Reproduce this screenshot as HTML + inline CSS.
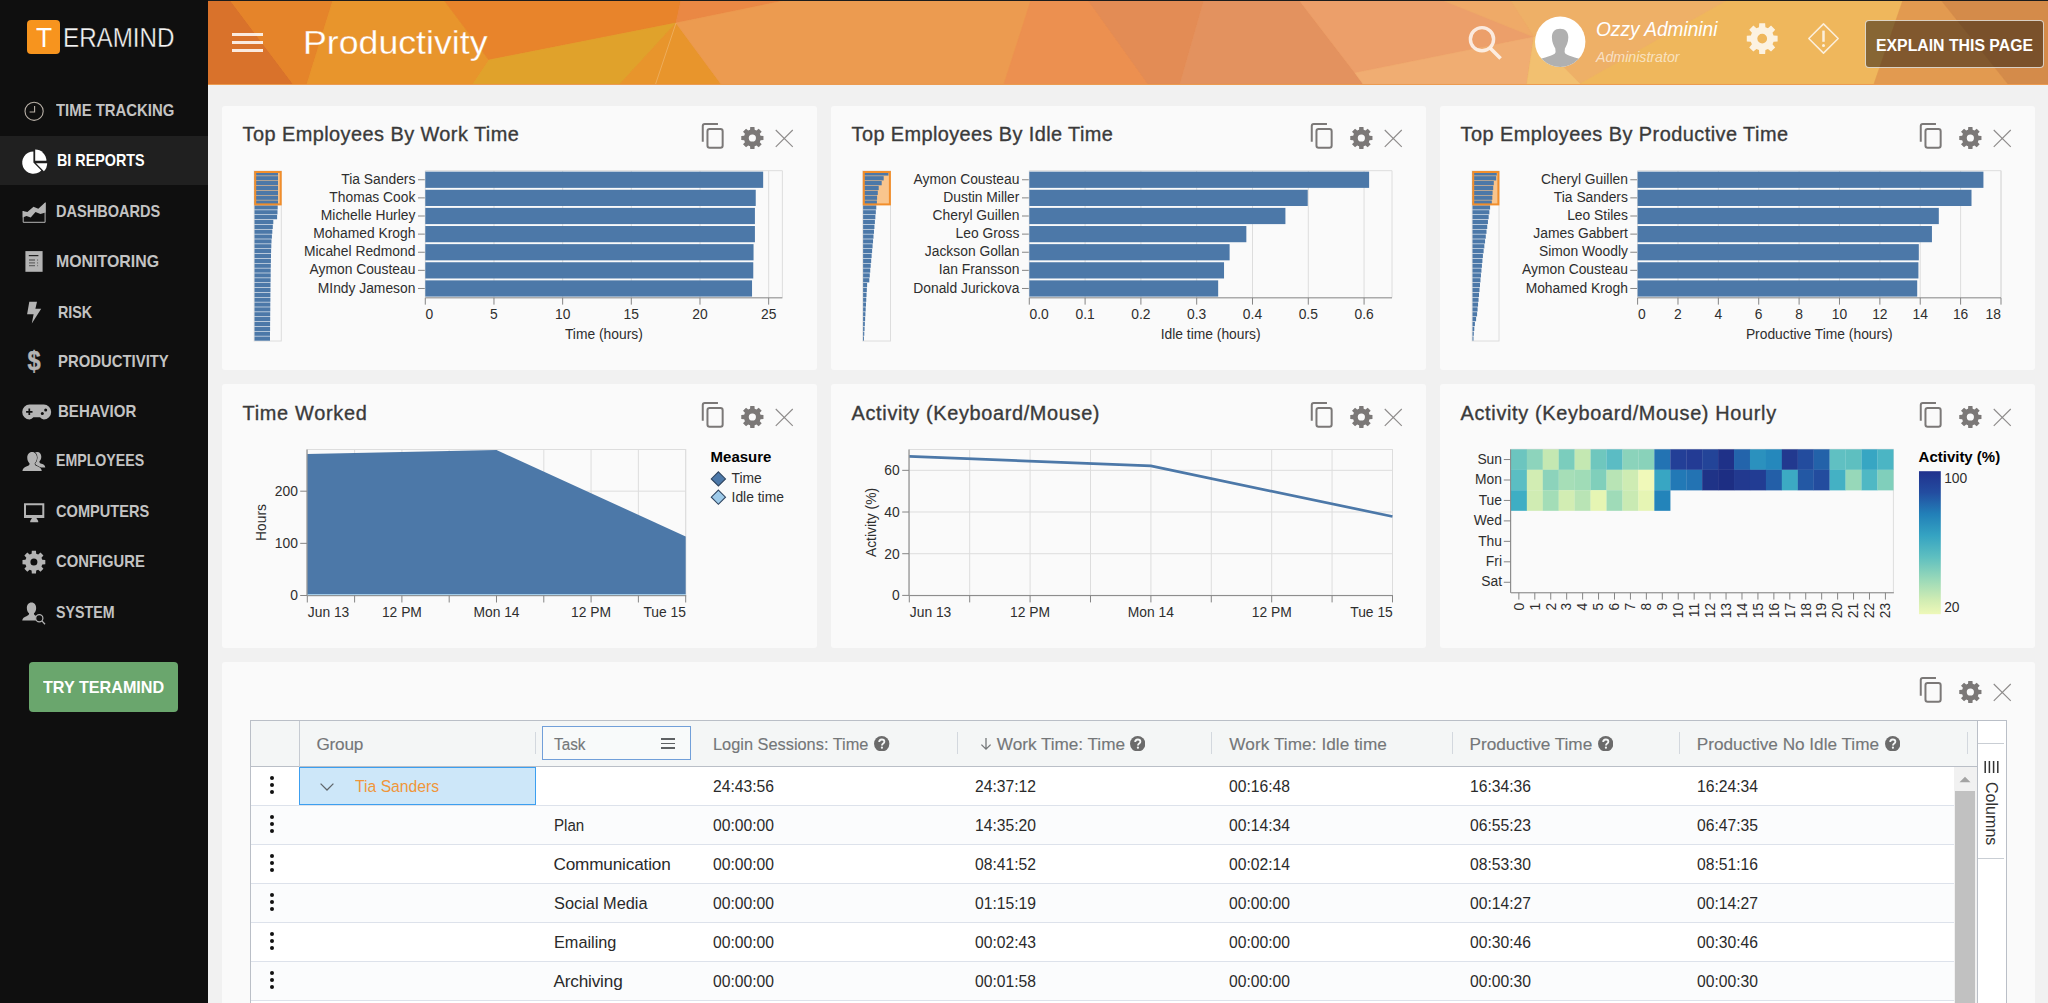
<!DOCTYPE html><html lang="en"><head><meta charset="utf-8"><title>Productivity - Teramind</title><style>html,body{margin:0;padding:0}body{width:2048px;height:1003px;overflow:hidden;position:relative;background:#f1f1f1;font-family:"Liberation Sans",sans-serif;}span{-webkit-font-smoothing:antialiased}</style></head><body><div id="content" style="position:absolute;left:208px;top:84px;width:1840px;height:919px;background:#f1f1f1"></div><div class="panel" style="position:absolute;left:222.00px;top:106.00px;width:594.67px;height:264.00px;background:#fafafa;border-radius:3px;overflow:hidden"><span class="ptitle" style="position:absolute;left:20.60px;top:19.05px;font-size:19.90px;line-height:19.90px;white-space:pre;font-weight:400;color:#3a3a3a;letter-spacing:0.450px;-webkit-text-stroke:0.35px #3a3a3a;">Top Employees By Work Time</span><svg style="position:absolute;left:0;top:0.00px" width="594.67" height="60" viewBox="0 0 594.67 60"><path d="M480.77 35.7 V20.1 Q480.77 18.1 482.77 18.1 H495.97" fill="none" stroke="#7b7877" stroke-width="2"/><rect x="485.47" y="23.1" width="15.2" height="18.6" rx="2.2" fill="none" stroke="#7b7877" stroke-width="2"/><path d="M528.06 23.82 L528.25 20.90 L532.49 20.90 L532.68 23.82 L534.52 24.58 L536.72 22.65 L539.72 25.65 L537.79 27.85 L538.55 29.69 L541.47 29.88 L541.47 34.12 L538.55 34.31 L537.79 36.15 L539.72 38.35 L536.72 41.35 L534.52 39.42 L532.68 40.18 L532.49 43.10 L528.25 43.10 L528.06 40.18 L526.22 39.42 L524.02 41.35 L521.02 38.35 L522.95 36.15 L522.19 34.31 L519.27 34.12 L519.27 29.88 L522.19 29.69 L522.95 27.85 L521.02 25.65 L524.02 22.65 L526.22 24.58Z M526.77 32.00 a3.60 3.60 0 1 0 7.20 0 a3.60 3.60 0 1 0 -7.20 0Z" fill="#7b7877" fill-rule="evenodd"/><path d="M553.77 24 L570.77 40.8 M570.77 24 L553.77 40.8" stroke="#7b7877" stroke-width="1.1" opacity="0.85"/></svg><svg style="position:absolute;left:0;top:0" width="594.67" height="264.00" viewBox="222.00 106.00 594.67 264.00" font-family='"Liberation Sans", sans-serif' font-size="13.85" fill="#2e2e2e"><rect x="254.20" y="171" width="27.10" height="170" fill="none" stroke="#dddddd" stroke-width="1"/><rect x="255.20" y="172" width="25.50" height="32.4" fill="#f9c58d"/><g fill="#4c78a8"><rect x="254.50" y="171.30" width="23.50" height="4.26"/><rect x="254.50" y="176.16" width="23.50" height="4.26"/><rect x="254.50" y="181.01" width="23.50" height="4.26"/><rect x="254.50" y="185.87" width="23.50" height="4.26"/><rect x="254.50" y="190.73" width="23.50" height="4.26"/><rect x="254.50" y="195.59" width="23.50" height="4.26"/><rect x="254.50" y="200.44" width="23.50" height="4.26"/><rect x="254.50" y="205.30" width="23.20" height="4.26"/><rect x="254.50" y="210.16" width="23.00" height="4.26"/><rect x="254.50" y="215.01" width="22.60" height="4.26"/><rect x="254.50" y="219.87" width="18.80" height="4.26"/><rect x="254.50" y="224.73" width="18.30" height="4.26"/><rect x="254.50" y="229.59" width="17.80" height="4.26"/><rect x="254.50" y="234.44" width="17.40" height="4.26"/><rect x="254.50" y="239.30" width="17.00" height="4.26"/><rect x="254.50" y="244.16" width="16.80" height="4.26"/><rect x="254.50" y="249.01" width="16.60" height="4.26"/><rect x="254.50" y="253.87" width="16.50" height="4.26"/><rect x="254.50" y="258.73" width="16.40" height="4.26"/><rect x="254.50" y="263.59" width="16.30" height="4.26"/><rect x="254.50" y="268.44" width="16.20" height="4.26"/><rect x="254.50" y="273.30" width="16.20" height="4.26"/><rect x="254.50" y="278.16" width="16.10" height="4.26"/><rect x="254.50" y="283.01" width="16.00" height="4.26"/><rect x="254.50" y="287.87" width="16.00" height="4.26"/><rect x="254.50" y="292.73" width="15.90" height="4.26"/><rect x="254.50" y="297.59" width="15.90" height="4.26"/><rect x="254.50" y="302.44" width="15.80" height="4.26"/><rect x="254.50" y="307.30" width="15.80" height="4.26"/><rect x="254.50" y="312.16" width="15.70" height="4.26"/><rect x="254.50" y="317.01" width="15.70" height="4.26"/><rect x="254.50" y="321.87" width="15.60" height="4.26"/><rect x="254.50" y="326.73" width="15.60" height="4.26"/><rect x="254.50" y="331.59" width="15.50" height="4.26"/><rect x="254.50" y="336.44" width="15.50" height="4.26"/></g><rect x="255.20" y="172" width="25.50" height="32.4" fill="none" stroke="#f28e2b" stroke-width="2"/><g stroke="#dddddd" stroke-width="1"><path d="M425.30 170.70 V297.54"/><path d="M493.97 170.70 V297.54"/><path d="M562.65 170.70 V297.54"/><path d="M631.32 170.70 V297.54"/><path d="M699.99 170.70 V297.54"/><path d="M768.67 170.70 V297.54"/><path d="M425.30 170.70 H782.40 V297.54" fill="none"/></g><g fill="#4c78a8"><rect x="425.30" y="171.65" width="337.87" height="16.22"/><rect x="425.30" y="189.77" width="330.45" height="16.22"/><rect x="425.30" y="207.89" width="329.63" height="16.22"/><rect x="425.30" y="226.01" width="329.63" height="16.22"/><rect x="425.30" y="244.13" width="328.26" height="16.22"/><rect x="425.30" y="262.25" width="327.98" height="16.22"/><rect x="425.30" y="280.37" width="326.75" height="16.22"/></g><g stroke="#858585" stroke-width="1"><path d="M425.30 297.84 H782.40"/><path d="M425.30 297.84 v6.8"/><path d="M493.97 297.84 v6.8"/><path d="M562.65 297.84 v6.8"/><path d="M631.32 297.84 v6.8"/><path d="M699.99 297.84 v6.8"/><path d="M768.67 297.84 v6.8"/><path d="M424.80 179.76 h-6.8"/><path d="M424.80 197.88 h-6.8"/><path d="M424.80 216.00 h-6.8"/><path d="M424.80 234.12 h-6.8"/><path d="M424.80 252.24 h-6.8"/><path d="M424.80 270.36 h-6.8"/><path d="M424.80 288.48 h-6.8"/></g><text x="415.40" y="183.82" text-anchor="end">Tia Sanders</text><text x="415.40" y="201.94" text-anchor="end">Thomas Cook</text><text x="415.40" y="220.06" text-anchor="end">Michelle Hurley</text><text x="415.40" y="238.18" text-anchor="end">Mohamed Krogh</text><text x="415.40" y="256.30" text-anchor="end">Micahel Redmond</text><text x="415.40" y="274.42" text-anchor="end">Aymon Cousteau</text><text x="415.40" y="292.54" text-anchor="end">MIndy Jameson</text><text x="425.60" y="319.46">0</text><text x="493.97" y="319.46" text-anchor="middle">5</text><text x="562.65" y="319.46" text-anchor="middle">10</text><text x="631.32" y="319.46" text-anchor="middle">15</text><text x="699.99" y="319.46" text-anchor="middle">20</text><text x="768.67" y="319.46" text-anchor="middle">25</text><text x="603.85" y="339.26" text-anchor="middle">Time (hours)</text></svg></div><div class="panel" style="position:absolute;left:831.00px;top:106.00px;width:594.67px;height:264.00px;background:#fafafa;border-radius:3px;overflow:hidden"><span class="ptitle" style="position:absolute;left:20.60px;top:19.05px;font-size:19.90px;line-height:19.90px;white-space:pre;font-weight:400;color:#3a3a3a;letter-spacing:0.410px;-webkit-text-stroke:0.35px #3a3a3a;">Top Employees By Idle Time</span><svg style="position:absolute;left:0;top:0.00px" width="594.67" height="60" viewBox="0 0 594.67 60"><path d="M480.77 35.7 V20.1 Q480.77 18.1 482.77 18.1 H495.97" fill="none" stroke="#7b7877" stroke-width="2"/><rect x="485.47" y="23.1" width="15.2" height="18.6" rx="2.2" fill="none" stroke="#7b7877" stroke-width="2"/><path d="M528.06 23.82 L528.25 20.90 L532.49 20.90 L532.68 23.82 L534.52 24.58 L536.72 22.65 L539.72 25.65 L537.79 27.85 L538.55 29.69 L541.47 29.88 L541.47 34.12 L538.55 34.31 L537.79 36.15 L539.72 38.35 L536.72 41.35 L534.52 39.42 L532.68 40.18 L532.49 43.10 L528.25 43.10 L528.06 40.18 L526.22 39.42 L524.02 41.35 L521.02 38.35 L522.95 36.15 L522.19 34.31 L519.27 34.12 L519.27 29.88 L522.19 29.69 L522.95 27.85 L521.02 25.65 L524.02 22.65 L526.22 24.58Z M526.77 32.00 a3.60 3.60 0 1 0 7.20 0 a3.60 3.60 0 1 0 -7.20 0Z" fill="#7b7877" fill-rule="evenodd"/><path d="M553.77 24 L570.77 40.8 M570.77 24 L553.77 40.8" stroke="#7b7877" stroke-width="1.1" opacity="0.85"/></svg><svg style="position:absolute;left:0;top:0" width="594.67" height="264.00" viewBox="831.00 106.00 594.67 264.00" font-family='"Liberation Sans", sans-serif' font-size="13.85" fill="#2e2e2e"><rect x="862.80" y="171" width="27.70" height="170" fill="none" stroke="#dddddd" stroke-width="1"/><rect x="863.80" y="172" width="26.10" height="32.4" fill="#f9c58d"/><g fill="#4c78a8"><rect x="863.10" y="171.30" width="25.40" height="4.26"/><rect x="863.10" y="176.16" width="20.60" height="4.26"/><rect x="863.10" y="181.01" width="18.60" height="4.26"/><rect x="863.10" y="185.87" width="15.60" height="4.26"/><rect x="863.10" y="190.73" width="14.70" height="4.26"/><rect x="863.10" y="195.59" width="14.00" height="4.26"/><rect x="863.10" y="200.44" width="13.80" height="4.26"/><rect x="863.10" y="205.30" width="13.20" height="4.26"/><rect x="863.10" y="210.16" width="12.73" height="4.26"/><rect x="863.10" y="215.01" width="12.27" height="4.26"/><rect x="863.10" y="219.87" width="11.80" height="4.26"/><rect x="863.10" y="224.73" width="11.33" height="4.26"/><rect x="863.10" y="229.59" width="10.87" height="4.26"/><rect x="863.10" y="234.44" width="10.40" height="4.26"/><rect x="863.10" y="239.30" width="9.93" height="4.26"/><rect x="863.10" y="244.16" width="9.47" height="4.26"/><rect x="863.10" y="249.01" width="9.00" height="4.26"/><rect x="863.10" y="253.87" width="8.53" height="4.26"/><rect x="863.10" y="258.73" width="8.07" height="4.26"/><rect x="863.10" y="263.59" width="7.60" height="4.26"/><rect x="863.10" y="268.44" width="7.13" height="4.26"/><rect x="863.10" y="273.30" width="6.67" height="4.26"/><rect x="863.10" y="278.16" width="6.20" height="4.26"/><rect x="863.10" y="283.01" width="4.00" height="4.26"/><rect x="863.10" y="287.87" width="3.72" height="4.26"/><rect x="863.10" y="292.73" width="3.44" height="4.26"/><rect x="863.10" y="297.59" width="3.15" height="4.26"/><rect x="863.10" y="302.44" width="2.87" height="4.26"/><rect x="863.10" y="307.30" width="2.59" height="4.26"/><rect x="863.10" y="312.16" width="2.31" height="4.26"/><rect x="863.10" y="317.01" width="2.03" height="4.26"/><rect x="863.10" y="321.87" width="1.75" height="4.26"/><rect x="863.10" y="326.73" width="1.46" height="4.26"/><rect x="863.10" y="331.59" width="1.18" height="4.26"/><rect x="863.10" y="336.44" width="0.90" height="4.26"/></g><rect x="863.80" y="172" width="26.10" height="32.4" fill="none" stroke="#f28e2b" stroke-width="2"/><g stroke="#dddddd" stroke-width="1"><path d="M1029.30 170.70 V297.54"/><path d="M1085.10 170.70 V297.54"/><path d="M1140.90 170.70 V297.54"/><path d="M1196.70 170.70 V297.54"/><path d="M1252.50 170.70 V297.54"/><path d="M1308.30 170.70 V297.54"/><path d="M1364.10 170.70 V297.54"/><path d="M1029.30 170.70 H1392.00 V297.54" fill="none"/></g><g fill="#4c78a8"><rect x="1029.30" y="171.65" width="339.82" height="16.22"/><rect x="1029.30" y="189.77" width="278.44" height="16.22"/><rect x="1029.30" y="207.89" width="256.12" height="16.22"/><rect x="1029.30" y="226.01" width="217.06" height="16.22"/><rect x="1029.30" y="244.13" width="200.32" height="16.22"/><rect x="1029.30" y="262.25" width="194.74" height="16.22"/><rect x="1029.30" y="280.37" width="188.88" height="16.22"/></g><g stroke="#858585" stroke-width="1"><path d="M1029.30 297.84 H1392.00"/><path d="M1029.30 297.84 v6.8"/><path d="M1085.10 297.84 v6.8"/><path d="M1140.90 297.84 v6.8"/><path d="M1196.70 297.84 v6.8"/><path d="M1252.50 297.84 v6.8"/><path d="M1308.30 297.84 v6.8"/><path d="M1364.10 297.84 v6.8"/><path d="M1028.80 179.76 h-6.8"/><path d="M1028.80 197.88 h-6.8"/><path d="M1028.80 216.00 h-6.8"/><path d="M1028.80 234.12 h-6.8"/><path d="M1028.80 252.24 h-6.8"/><path d="M1028.80 270.36 h-6.8"/><path d="M1028.80 288.48 h-6.8"/></g><text x="1019.40" y="183.82" text-anchor="end">Aymon Cousteau</text><text x="1019.40" y="201.94" text-anchor="end">Dustin Miller</text><text x="1019.40" y="220.06" text-anchor="end">Cheryl Guillen</text><text x="1019.40" y="238.18" text-anchor="end">Leo Gross</text><text x="1019.40" y="256.30" text-anchor="end">Jackson Gollan</text><text x="1019.40" y="274.42" text-anchor="end">Ian Fransson</text><text x="1019.40" y="292.54" text-anchor="end">Donald Jurickova</text><text x="1029.60" y="319.46">0.0</text><text x="1085.10" y="319.46" text-anchor="middle">0.1</text><text x="1140.90" y="319.46" text-anchor="middle">0.2</text><text x="1196.70" y="319.46" text-anchor="middle">0.3</text><text x="1252.50" y="319.46" text-anchor="middle">0.4</text><text x="1308.30" y="319.46" text-anchor="middle">0.5</text><text x="1364.10" y="319.46" text-anchor="middle">0.6</text><text x="1210.65" y="339.26" text-anchor="middle">Idle time (hours)</text></svg></div><div class="panel" style="position:absolute;left:1440.00px;top:106.00px;width:594.67px;height:264.00px;background:#fafafa;border-radius:3px;overflow:hidden"><span class="ptitle" style="position:absolute;left:20.60px;top:19.05px;font-size:19.90px;line-height:19.90px;white-space:pre;font-weight:400;color:#3a3a3a;letter-spacing:0.469px;-webkit-text-stroke:0.35px #3a3a3a;">Top Employees By Productive Time</span><svg style="position:absolute;left:0;top:0.00px" width="594.67" height="60" viewBox="0 0 594.67 60"><path d="M480.77 35.7 V20.1 Q480.77 18.1 482.77 18.1 H495.97" fill="none" stroke="#7b7877" stroke-width="2"/><rect x="485.47" y="23.1" width="15.2" height="18.6" rx="2.2" fill="none" stroke="#7b7877" stroke-width="2"/><path d="M528.06 23.82 L528.25 20.90 L532.49 20.90 L532.68 23.82 L534.52 24.58 L536.72 22.65 L539.72 25.65 L537.79 27.85 L538.55 29.69 L541.47 29.88 L541.47 34.12 L538.55 34.31 L537.79 36.15 L539.72 38.35 L536.72 41.35 L534.52 39.42 L532.68 40.18 L532.49 43.10 L528.25 43.10 L528.06 40.18 L526.22 39.42 L524.02 41.35 L521.02 38.35 L522.95 36.15 L522.19 34.31 L519.27 34.12 L519.27 29.88 L522.19 29.69 L522.95 27.85 L521.02 25.65 L524.02 22.65 L526.22 24.58Z M526.77 32.00 a3.60 3.60 0 1 0 7.20 0 a3.60 3.60 0 1 0 -7.20 0Z" fill="#7b7877" fill-rule="evenodd"/><path d="M553.77 24 L570.77 40.8 M570.77 24 L553.77 40.8" stroke="#7b7877" stroke-width="1.1" opacity="0.85"/></svg><svg style="position:absolute;left:0;top:0" width="594.67" height="264.00" viewBox="1440.00 106.00 594.67 264.00" font-family='"Liberation Sans", sans-serif' font-size="13.85" fill="#2e2e2e"><rect x="1472.20" y="171" width="26.80" height="170" fill="none" stroke="#dddddd" stroke-width="1"/><rect x="1473.20" y="172" width="25.20" height="32.4" fill="#f9c58d"/><g fill="#4c78a8"><rect x="1472.50" y="171.30" width="24.30" height="4.26"/><rect x="1472.50" y="176.16" width="23.70" height="4.26"/><rect x="1472.50" y="181.01" width="21.30" height="4.26"/><rect x="1472.50" y="185.87" width="20.70" height="4.26"/><rect x="1472.50" y="190.73" width="20.10" height="4.26"/><rect x="1472.50" y="195.59" width="19.80" height="4.26"/><rect x="1472.50" y="200.44" width="19.30" height="4.26"/><rect x="1472.50" y="205.30" width="17.60" height="4.26"/><rect x="1472.50" y="210.16" width="16.88" height="4.26"/><rect x="1472.50" y="215.01" width="16.16" height="4.26"/><rect x="1472.50" y="219.87" width="15.44" height="4.26"/><rect x="1472.50" y="224.73" width="14.72" height="4.26"/><rect x="1472.50" y="229.59" width="14.00" height="4.26"/><rect x="1472.50" y="234.44" width="13.28" height="4.26"/><rect x="1472.50" y="239.30" width="12.56" height="4.26"/><rect x="1472.50" y="244.16" width="11.84" height="4.26"/><rect x="1472.50" y="249.01" width="11.12" height="4.26"/><rect x="1472.50" y="253.87" width="10.40" height="4.26"/><rect x="1472.50" y="258.73" width="9.90" height="4.26"/><rect x="1472.50" y="263.59" width="9.42" height="4.26"/><rect x="1472.50" y="268.44" width="8.94" height="4.26"/><rect x="1472.50" y="273.30" width="8.45" height="4.26"/><rect x="1472.50" y="278.16" width="7.97" height="4.26"/><rect x="1472.50" y="283.01" width="7.49" height="4.26"/><rect x="1472.50" y="287.87" width="7.01" height="4.26"/><rect x="1472.50" y="292.73" width="6.53" height="4.26"/><rect x="1472.50" y="297.59" width="6.05" height="4.26"/><rect x="1472.50" y="302.44" width="5.56" height="4.26"/><rect x="1472.50" y="307.30" width="5.08" height="4.26"/><rect x="1472.50" y="312.16" width="4.60" height="4.26"/><rect x="1472.50" y="317.01" width="3.60" height="4.26"/><rect x="1472.50" y="321.87" width="2.40" height="4.26"/><rect x="1472.50" y="326.73" width="1.80" height="4.26"/><rect x="1472.50" y="331.59" width="1.30" height="4.26"/><rect x="1472.50" y="336.44" width="1.00" height="4.26"/></g><rect x="1473.20" y="172" width="25.20" height="32.4" fill="none" stroke="#f28e2b" stroke-width="2"/><g stroke="#dddddd" stroke-width="1"><path d="M1637.60 170.70 V297.54"/><path d="M1677.98 170.70 V297.54"/><path d="M1718.36 170.70 V297.54"/><path d="M1758.73 170.70 V297.54"/><path d="M1799.11 170.70 V297.54"/><path d="M1839.49 170.70 V297.54"/><path d="M1879.87 170.70 V297.54"/><path d="M1920.24 170.70 V297.54"/><path d="M1960.62 170.70 V297.54"/><path d="M2001.00 170.70 V297.54"/><path d="M1637.60 170.70 H2001.00 V297.54" fill="none"/></g><g fill="#4c78a8"><rect x="1637.60" y="171.65" width="345.84" height="16.22"/><rect x="1637.60" y="189.77" width="333.92" height="16.22"/><rect x="1637.60" y="207.89" width="301.22" height="16.22"/><rect x="1637.60" y="226.01" width="294.35" height="16.22"/><rect x="1637.60" y="244.13" width="281.23" height="16.22"/><rect x="1637.60" y="262.25" width="280.83" height="16.22"/><rect x="1637.60" y="280.37" width="279.62" height="16.22"/></g><g stroke="#858585" stroke-width="1"><path d="M1637.60 297.84 H2001.00"/><path d="M1637.60 297.84 v6.8"/><path d="M1677.98 297.84 v6.8"/><path d="M1718.36 297.84 v6.8"/><path d="M1758.73 297.84 v6.8"/><path d="M1799.11 297.84 v6.8"/><path d="M1839.49 297.84 v6.8"/><path d="M1879.87 297.84 v6.8"/><path d="M1920.24 297.84 v6.8"/><path d="M1960.62 297.84 v6.8"/><path d="M2001.00 297.84 v6.8"/><path d="M1637.10 179.76 h-6.8"/><path d="M1637.10 197.88 h-6.8"/><path d="M1637.10 216.00 h-6.8"/><path d="M1637.10 234.12 h-6.8"/><path d="M1637.10 252.24 h-6.8"/><path d="M1637.10 270.36 h-6.8"/><path d="M1637.10 288.48 h-6.8"/></g><text x="1627.90" y="183.82" text-anchor="end">Cheryl Guillen</text><text x="1627.90" y="201.94" text-anchor="end">Tia Sanders</text><text x="1627.90" y="220.06" text-anchor="end">Leo Stiles</text><text x="1627.90" y="238.18" text-anchor="end">James Gabbert</text><text x="1627.90" y="256.30" text-anchor="end">Simon Woodly</text><text x="1627.90" y="274.42" text-anchor="end">Aymon Cousteau</text><text x="1627.90" y="292.54" text-anchor="end">Mohamed Krogh</text><text x="1637.90" y="319.46">0</text><text x="1677.98" y="319.46" text-anchor="middle">2</text><text x="1718.36" y="319.46" text-anchor="middle">4</text><text x="1758.73" y="319.46" text-anchor="middle">6</text><text x="1799.11" y="319.46" text-anchor="middle">8</text><text x="1839.49" y="319.46" text-anchor="middle">10</text><text x="1879.87" y="319.46" text-anchor="middle">12</text><text x="1920.24" y="319.46" text-anchor="middle">14</text><text x="1960.62" y="319.46" text-anchor="middle">16</text><text x="2001.00" y="319.46" text-anchor="end">18</text><text x="1819.30" y="339.26" text-anchor="middle">Productive Time (hours)</text></svg></div><div class="panel" style="position:absolute;left:222.00px;top:384.00px;width:594.67px;height:264.00px;background:#fafafa;border-radius:3px;overflow:hidden"><span class="ptitle" style="position:absolute;left:20.60px;top:19.75px;font-size:19.90px;line-height:19.90px;white-space:pre;font-weight:400;color:#3a3a3a;letter-spacing:0.703px;-webkit-text-stroke:0.35px #3a3a3a;">Time Worked</span><svg style="position:absolute;left:0;top:0.70px" width="594.67" height="60" viewBox="0 0 594.67 60"><path d="M480.77 35.7 V20.1 Q480.77 18.1 482.77 18.1 H495.97" fill="none" stroke="#7b7877" stroke-width="2"/><rect x="485.47" y="23.1" width="15.2" height="18.6" rx="2.2" fill="none" stroke="#7b7877" stroke-width="2"/><path d="M528.06 23.82 L528.25 20.90 L532.49 20.90 L532.68 23.82 L534.52 24.58 L536.72 22.65 L539.72 25.65 L537.79 27.85 L538.55 29.69 L541.47 29.88 L541.47 34.12 L538.55 34.31 L537.79 36.15 L539.72 38.35 L536.72 41.35 L534.52 39.42 L532.68 40.18 L532.49 43.10 L528.25 43.10 L528.06 40.18 L526.22 39.42 L524.02 41.35 L521.02 38.35 L522.95 36.15 L522.19 34.31 L519.27 34.12 L519.27 29.88 L522.19 29.69 L522.95 27.85 L521.02 25.65 L524.02 22.65 L526.22 24.58Z M526.77 32.00 a3.60 3.60 0 1 0 7.20 0 a3.60 3.60 0 1 0 -7.20 0Z" fill="#7b7877" fill-rule="evenodd"/><path d="M553.77 24 L570.77 40.8 M570.77 24 L553.77 40.8" stroke="#7b7877" stroke-width="1.1" opacity="0.85"/></svg><svg style="position:absolute;left:0;top:0" width="594.67" height="264.00" viewBox="222.00 384.00 594.67 264.00" font-family='"Liberation Sans", sans-serif' font-size="13.85" fill="#2e2e2e"><g stroke="#dddddd" stroke-width="1" fill="none"><path d="M307.30 449.50 V595.50"/><path d="M354.60 449.50 V595.50"/><path d="M401.90 449.50 V595.50"/><path d="M449.20 449.50 V595.50"/><path d="M496.50 449.50 V595.50"/><path d="M543.80 449.50 V595.50"/><path d="M591.10 449.50 V595.50"/><path d="M638.40 449.50 V595.50"/><path d="M685.70 449.50 V595.50"/><path d="M307.30 595.50 H685.70"/><path d="M307.30 543.35 H685.70"/><path d="M307.30 491.20 H685.70"/><rect x="307.30" y="449.50" width="378.40" height="146.00"/></g><path d="M307.30 594.30 L307.30 453.9 L496.50 450.0 L685.70 536.5 L685.70 594.30 Z" fill="#4c78a8"/><rect x="307.30" y="594.10" width="378.40" height="1.4" fill="#9ecae9"/><g stroke="#858585" stroke-width="1" fill="none"><path d="M307.30 595.70 H686.20"/><path d="M307.00 449.50 V595.70"/><path d="M307.30 595.70 v6.8"/><path d="M354.60 595.70 v6.8"/><path d="M401.90 595.70 v6.8"/><path d="M449.20 595.70 v6.8"/><path d="M496.50 595.70 v6.8"/><path d="M543.80 595.70 v6.8"/><path d="M591.10 595.70 v6.8"/><path d="M638.40 595.70 v6.8"/><path d="M685.70 595.70 v6.8"/><path d="M307.00 595.50 h-6.8"/><path d="M307.00 543.35 h-6.8"/><path d="M307.00 491.20 h-6.8"/></g><text x="297.90" y="600.46" text-anchor="end">0</text><text x="297.90" y="548.31" text-anchor="end">100</text><text x="297.90" y="496.16" text-anchor="end">200</text><text x="307.80" y="617.06">Jun 13</text><text x="401.90" y="617.06" text-anchor="middle">12 PM</text><text x="496.50" y="617.06" text-anchor="middle">Mon 14</text><text x="591.10" y="617.06" text-anchor="middle">12 PM</text><text x="686.00" y="617.06" text-anchor="end">Tue 15</text><text transform="translate(266.50 522.50) rotate(-90)" text-anchor="middle">Hours</text><text x="710.6" y="462.20" font-weight="700" font-size="15" fill="#000">Measure</text><path d="M718.4 471.80 l7.1 7.1 l-7.1 7.1 l-7.1 -7.1Z" fill="#4c78a8" stroke="#2f4560" stroke-width="1.1"/><text x="731.60" y="483.46">Time</text><path d="M718.4 490.10 l7.1 7.1 l-7.1 7.1 l-7.1 -7.1Z" fill="#9ecae9" stroke="#2f4560" stroke-width="1.1"/><text x="731.60" y="501.76">Idle time</text></svg></div><div class="panel" style="position:absolute;left:831.00px;top:384.00px;width:594.67px;height:264.00px;background:#fafafa;border-radius:3px;overflow:hidden"><span class="ptitle" style="position:absolute;left:20.60px;top:19.75px;font-size:19.90px;line-height:19.90px;white-space:pre;font-weight:400;color:#3a3a3a;letter-spacing:0.656px;-webkit-text-stroke:0.35px #3a3a3a;">Activity (Keyboard/Mouse)</span><svg style="position:absolute;left:0;top:0.70px" width="594.67" height="60" viewBox="0 0 594.67 60"><path d="M480.77 35.7 V20.1 Q480.77 18.1 482.77 18.1 H495.97" fill="none" stroke="#7b7877" stroke-width="2"/><rect x="485.47" y="23.1" width="15.2" height="18.6" rx="2.2" fill="none" stroke="#7b7877" stroke-width="2"/><path d="M528.06 23.82 L528.25 20.90 L532.49 20.90 L532.68 23.82 L534.52 24.58 L536.72 22.65 L539.72 25.65 L537.79 27.85 L538.55 29.69 L541.47 29.88 L541.47 34.12 L538.55 34.31 L537.79 36.15 L539.72 38.35 L536.72 41.35 L534.52 39.42 L532.68 40.18 L532.49 43.10 L528.25 43.10 L528.06 40.18 L526.22 39.42 L524.02 41.35 L521.02 38.35 L522.95 36.15 L522.19 34.31 L519.27 34.12 L519.27 29.88 L522.19 29.69 L522.95 27.85 L521.02 25.65 L524.02 22.65 L526.22 24.58Z M526.77 32.00 a3.60 3.60 0 1 0 7.20 0 a3.60 3.60 0 1 0 -7.20 0Z" fill="#7b7877" fill-rule="evenodd"/><path d="M553.77 24 L570.77 40.8 M570.77 24 L553.77 40.8" stroke="#7b7877" stroke-width="1.1" opacity="0.85"/></svg><svg style="position:absolute;left:0;top:0" width="594.67" height="264.00" viewBox="831.00 384.00 594.67 264.00" font-family='"Liberation Sans", sans-serif' font-size="13.85" fill="#2e2e2e"><g stroke="#dddddd" stroke-width="1" fill="none"><path d="M909.30 449.50 V595.40"/><path d="M969.70 449.50 V595.40"/><path d="M1030.10 449.50 V595.40"/><path d="M1090.50 449.50 V595.40"/><path d="M1150.90 449.50 V595.40"/><path d="M1211.30 449.50 V595.40"/><path d="M1271.70 449.50 V595.40"/><path d="M1332.10 449.50 V595.40"/><path d="M1392.50 449.50 V595.40"/><path d="M909.30 595.40 H1392.50"/><path d="M909.30 553.71 H1392.50"/><path d="M909.30 512.03 H1392.50"/><path d="M909.30 470.34 H1392.50"/><rect x="909.30" y="449.50" width="483.20" height="145.90"/></g><path d="M909.30 456.4 L1150.90 465.9 L1392.50 516.5" fill="none" stroke="#4c78a8" stroke-width="2.7"/><g stroke="#858585" stroke-width="1" fill="none"><path d="M909.30 595.60 H1393.00"/><path d="M909.00 449.50 V595.60"/><path d="M909.30 595.60 v6.8"/><path d="M969.70 595.60 v6.8"/><path d="M1030.10 595.60 v6.8"/><path d="M1090.50 595.60 v6.8"/><path d="M1150.90 595.60 v6.8"/><path d="M1211.30 595.60 v6.8"/><path d="M1271.70 595.60 v6.8"/><path d="M1332.10 595.60 v6.8"/><path d="M1392.50 595.60 v6.8"/><path d="M909.00 595.40 h-6.8"/><path d="M909.00 553.71 h-6.8"/><path d="M909.00 512.03 h-6.8"/><path d="M909.00 470.34 h-6.8"/></g><text x="899.60" y="600.36" text-anchor="end">0</text><text x="899.60" y="558.68" text-anchor="end">20</text><text x="899.60" y="516.99" text-anchor="end">40</text><text x="899.60" y="475.31" text-anchor="end">60</text><text x="909.80" y="617.06">Jun 13</text><text x="1030.10" y="617.06" text-anchor="middle">12 PM</text><text x="1150.90" y="617.06" text-anchor="middle">Mon 14</text><text x="1271.70" y="617.06" text-anchor="middle">12 PM</text><text x="1392.80" y="617.06" text-anchor="end">Tue 15</text><text transform="translate(875.90 522.45) rotate(-90)" text-anchor="middle">Activity (%)</text></svg></div><div class="panel" style="position:absolute;left:1440.00px;top:384.00px;width:594.67px;height:264.00px;background:#fafafa;border-radius:3px;overflow:hidden"><span class="ptitle" style="position:absolute;left:20.60px;top:19.75px;font-size:19.90px;line-height:19.90px;white-space:pre;font-weight:400;color:#3a3a3a;letter-spacing:0.656px;-webkit-text-stroke:0.35px #3a3a3a;">Activity (Keyboard/Mouse) Hourly</span><svg style="position:absolute;left:0;top:0.70px" width="594.67" height="60" viewBox="0 0 594.67 60"><path d="M480.77 35.7 V20.1 Q480.77 18.1 482.77 18.1 H495.97" fill="none" stroke="#7b7877" stroke-width="2"/><rect x="485.47" y="23.1" width="15.2" height="18.6" rx="2.2" fill="none" stroke="#7b7877" stroke-width="2"/><path d="M528.06 23.82 L528.25 20.90 L532.49 20.90 L532.68 23.82 L534.52 24.58 L536.72 22.65 L539.72 25.65 L537.79 27.85 L538.55 29.69 L541.47 29.88 L541.47 34.12 L538.55 34.31 L537.79 36.15 L539.72 38.35 L536.72 41.35 L534.52 39.42 L532.68 40.18 L532.49 43.10 L528.25 43.10 L528.06 40.18 L526.22 39.42 L524.02 41.35 L521.02 38.35 L522.95 36.15 L522.19 34.31 L519.27 34.12 L519.27 29.88 L522.19 29.69 L522.95 27.85 L521.02 25.65 L524.02 22.65 L526.22 24.58Z M526.77 32.00 a3.60 3.60 0 1 0 7.20 0 a3.60 3.60 0 1 0 -7.20 0Z" fill="#7b7877" fill-rule="evenodd"/><path d="M553.77 24 L570.77 40.8 M570.77 24 L553.77 40.8" stroke="#7b7877" stroke-width="1.1" opacity="0.85"/></svg><svg style="position:absolute;left:0;top:0" width="594.67" height="264.00" viewBox="1440.00 384.00 594.67 264.00" font-family='"Liberation Sans", sans-serif' font-size="13.85" fill="#2e2e2e"><rect x="1510.90" y="449.30" width="382.50" height="143.20" fill="none" stroke="#dddddd" stroke-width="1"/><rect x="1510.90" y="449.30" width="16.09" height="20.61" fill="#6cc5bf"/><rect x="1526.84" y="449.30" width="16.09" height="20.61" fill="#8dd4bc"/><rect x="1542.78" y="449.30" width="16.09" height="20.61" fill="#c4e8b2"/><rect x="1558.71" y="449.30" width="16.09" height="20.61" fill="#7bcdbd"/><rect x="1574.65" y="449.30" width="16.09" height="20.61" fill="#c4e8b2"/><rect x="1590.59" y="449.30" width="16.09" height="20.61" fill="#6fc7be"/><rect x="1606.53" y="449.30" width="16.09" height="20.61" fill="#5bbcc4"/><rect x="1622.46" y="449.30" width="16.09" height="20.61" fill="#8bd3bb"/><rect x="1638.40" y="449.30" width="16.09" height="20.61" fill="#89d2ba"/><rect x="1654.34" y="449.30" width="16.09" height="20.61" fill="#2373b3"/><rect x="1670.28" y="449.30" width="16.09" height="20.61" fill="#233f97"/><rect x="1686.21" y="449.30" width="16.09" height="20.61" fill="#233b94"/><rect x="1702.15" y="449.30" width="16.09" height="20.61" fill="#234498"/><rect x="1718.09" y="449.30" width="16.09" height="20.61" fill="#1f3188"/><rect x="1734.03" y="449.30" width="16.09" height="20.61" fill="#2364ab"/><rect x="1749.96" y="449.30" width="16.09" height="20.61" fill="#2b91be"/><rect x="1765.90" y="449.30" width="16.09" height="20.61" fill="#2588bc"/><rect x="1781.84" y="449.30" width="16.09" height="20.61" fill="#22398f"/><rect x="1797.78" y="449.30" width="16.09" height="20.61" fill="#234c9e"/><rect x="1813.71" y="449.30" width="16.09" height="20.61" fill="#2362a9"/><rect x="1829.65" y="449.30" width="16.09" height="20.61" fill="#60c0c2"/><rect x="1845.59" y="449.30" width="16.09" height="20.61" fill="#5ebfc0"/><rect x="1861.53" y="449.30" width="16.09" height="20.61" fill="#37a6c3"/><rect x="1877.46" y="449.30" width="16.09" height="20.61" fill="#4bb5c4"/><rect x="1510.90" y="469.76" width="16.09" height="20.61" fill="#5bbec3"/><rect x="1526.84" y="469.76" width="16.09" height="20.61" fill="#d2edb3"/><rect x="1542.78" y="469.76" width="16.09" height="20.61" fill="#8cd3bb"/><rect x="1558.71" y="469.76" width="16.09" height="20.61" fill="#a6deb7"/><rect x="1574.65" y="469.76" width="16.09" height="20.61" fill="#a0dcb7"/><rect x="1590.59" y="469.76" width="16.09" height="20.61" fill="#80cfbb"/><rect x="1606.53" y="469.76" width="16.09" height="20.61" fill="#b8e4b5"/><rect x="1622.46" y="469.76" width="16.09" height="20.61" fill="#ceecb3"/><rect x="1638.40" y="469.76" width="16.09" height="20.61" fill="#f0f9b9"/><rect x="1654.34" y="469.76" width="16.09" height="20.61" fill="#38a6c3"/><rect x="1670.28" y="469.76" width="16.09" height="20.61" fill="#2279b6"/><rect x="1686.21" y="469.76" width="16.09" height="20.61" fill="#2373b3"/><rect x="1702.15" y="469.76" width="16.09" height="20.61" fill="#1f3387"/><rect x="1718.09" y="469.76" width="16.09" height="20.61" fill="#1d2e83"/><rect x="1734.03" y="469.76" width="16.09" height="20.61" fill="#22398f"/><rect x="1749.96" y="469.76" width="16.09" height="20.61" fill="#223c93"/><rect x="1765.90" y="469.76" width="16.09" height="20.61" fill="#235fa8"/><rect x="1781.84" y="469.76" width="16.09" height="20.61" fill="#3caac3"/><rect x="1797.78" y="469.76" width="16.09" height="20.61" fill="#2358a4"/><rect x="1813.71" y="469.76" width="16.09" height="20.61" fill="#234c9e"/><rect x="1829.65" y="469.76" width="16.09" height="20.61" fill="#44b1c4"/><rect x="1845.59" y="469.76" width="16.09" height="20.61" fill="#97d8b9"/><rect x="1861.53" y="469.76" width="16.09" height="20.61" fill="#4fb8c4"/><rect x="1877.46" y="469.76" width="16.09" height="20.61" fill="#80cfbb"/><rect x="1510.90" y="490.21" width="16.09" height="20.61" fill="#3eaec4"/><rect x="1526.84" y="490.21" width="16.09" height="20.61" fill="#d0ecb3"/><rect x="1542.78" y="490.21" width="16.09" height="20.61" fill="#a3ddb7"/><rect x="1558.71" y="490.21" width="16.09" height="20.61" fill="#d2edb3"/><rect x="1574.65" y="490.21" width="16.09" height="20.61" fill="#b9e4b5"/><rect x="1590.59" y="490.21" width="16.09" height="20.61" fill="#e6f5b3"/><rect x="1606.53" y="490.21" width="16.09" height="20.61" fill="#9fdbb8"/><rect x="1622.46" y="490.21" width="16.09" height="20.61" fill="#c9eab3"/><rect x="1638.40" y="490.21" width="16.09" height="20.61" fill="#e6f5b4"/><rect x="1654.34" y="490.21" width="16.09" height="20.61" fill="#2384ba"/><g stroke="#858585" stroke-width="1" fill="none"><path d="M1510.90 592.80 H1893.90"/><path d="M1510.60 449.30 V592.80"/><path d="M1518.87 592.80 v6.8"/><path d="M1534.81 592.80 v6.8"/><path d="M1550.74 592.80 v6.8"/><path d="M1566.68 592.80 v6.8"/><path d="M1582.62 592.80 v6.8"/><path d="M1598.56 592.80 v6.8"/><path d="M1614.49 592.80 v6.8"/><path d="M1630.43 592.80 v6.8"/><path d="M1646.37 592.80 v6.8"/><path d="M1662.31 592.80 v6.8"/><path d="M1678.24 592.80 v6.8"/><path d="M1694.18 592.80 v6.8"/><path d="M1710.12 592.80 v6.8"/><path d="M1726.06 592.80 v6.8"/><path d="M1741.99 592.80 v6.8"/><path d="M1757.93 592.80 v6.8"/><path d="M1773.87 592.80 v6.8"/><path d="M1789.81 592.80 v6.8"/><path d="M1805.74 592.80 v6.8"/><path d="M1821.68 592.80 v6.8"/><path d="M1837.62 592.80 v6.8"/><path d="M1853.56 592.80 v6.8"/><path d="M1869.49 592.80 v6.8"/><path d="M1885.43 592.80 v6.8"/><path d="M1510.60 459.53 h-6.8"/><path d="M1510.60 479.99 h-6.8"/><path d="M1510.60 500.44 h-6.8"/><path d="M1510.60 520.90 h-6.8"/><path d="M1510.60 541.36 h-6.8"/><path d="M1510.60 561.81 h-6.8"/><path d="M1510.60 582.27 h-6.8"/></g><text x="1502.00" y="463.69" text-anchor="end">Sun</text><text x="1502.00" y="484.15" text-anchor="end">Mon</text><text x="1502.00" y="504.61" text-anchor="end">Tue</text><text x="1502.00" y="525.06" text-anchor="end">Wed</text><text x="1502.00" y="545.52" text-anchor="end">Thu</text><text x="1502.00" y="565.98" text-anchor="end">Fri</text><text x="1502.00" y="586.44" text-anchor="end">Sat</text><text transform="translate(1523.63 602.80) rotate(-90)" text-anchor="end">0</text><text transform="translate(1539.57 602.80) rotate(-90)" text-anchor="end">1</text><text transform="translate(1555.51 602.80) rotate(-90)" text-anchor="end">2</text><text transform="translate(1571.45 602.80) rotate(-90)" text-anchor="end">3</text><text transform="translate(1587.38 602.80) rotate(-90)" text-anchor="end">4</text><text transform="translate(1603.32 602.80) rotate(-90)" text-anchor="end">5</text><text transform="translate(1619.26 602.80) rotate(-90)" text-anchor="end">6</text><text transform="translate(1635.20 602.80) rotate(-90)" text-anchor="end">7</text><text transform="translate(1651.13 602.80) rotate(-90)" text-anchor="end">8</text><text transform="translate(1667.07 602.80) rotate(-90)" text-anchor="end">9</text><text transform="translate(1683.01 602.80) rotate(-90)" text-anchor="end">10</text><text transform="translate(1698.95 602.80) rotate(-90)" text-anchor="end">11</text><text transform="translate(1714.88 602.80) rotate(-90)" text-anchor="end">12</text><text transform="translate(1730.82 602.80) rotate(-90)" text-anchor="end">13</text><text transform="translate(1746.76 602.80) rotate(-90)" text-anchor="end">14</text><text transform="translate(1762.70 602.80) rotate(-90)" text-anchor="end">15</text><text transform="translate(1778.63 602.80) rotate(-90)" text-anchor="end">16</text><text transform="translate(1794.57 602.80) rotate(-90)" text-anchor="end">17</text><text transform="translate(1810.51 602.80) rotate(-90)" text-anchor="end">18</text><text transform="translate(1826.45 602.80) rotate(-90)" text-anchor="end">19</text><text transform="translate(1842.38 602.80) rotate(-90)" text-anchor="end">20</text><text transform="translate(1858.32 602.80) rotate(-90)" text-anchor="end">21</text><text transform="translate(1874.26 602.80) rotate(-90)" text-anchor="end">22</text><text transform="translate(1890.20 602.80) rotate(-90)" text-anchor="end">23</text><defs><linearGradient id="ygb" x1="0" y1="0" x2="0" y2="1"><stop offset="0" stop-color="#21318d"/><stop offset="0.15" stop-color="#234da0"/><stop offset="0.3" stop-color="#2280b8"/><stop offset="0.45" stop-color="#35a3c2"/><stop offset="0.6" stop-color="#5ebfc0"/><stop offset="0.75" stop-color="#97d8b9"/><stop offset="0.9" stop-color="#d0ecb3"/><stop offset="1" stop-color="#eef8b8"/></linearGradient></defs><text x="1918.6" y="462.20" font-weight="700" font-size="15" fill="#000">Activity (%)</text><rect x="1919" y="471.2" width="21.8" height="143" fill="url(#ygb)"/><text x="1944.20" y="482.76">100</text><text x="1944.20" y="612.26">20</text></svg></div><div class="panel" style="position:absolute;left:222.00px;top:662.00px;width:1812.67px;height:420.00px;background:#fafafa;border-radius:3px;overflow:hidden"><svg style="position:absolute;left:0;top:-2.30px" width="1812.67" height="60" viewBox="0 0 1812.67 60"><path d="M1698.77 35.7 V20.1 Q1698.77 18.1 1700.77 18.1 H1713.97" fill="none" stroke="#7b7877" stroke-width="2"/><rect x="1703.47" y="23.1" width="15.2" height="18.6" rx="2.2" fill="none" stroke="#7b7877" stroke-width="2"/><path d="M1746.06 23.82 L1746.25 20.90 L1750.49 20.90 L1750.68 23.82 L1752.52 24.58 L1754.72 22.65 L1757.72 25.65 L1755.79 27.85 L1756.55 29.69 L1759.47 29.88 L1759.47 34.12 L1756.55 34.31 L1755.79 36.15 L1757.72 38.35 L1754.72 41.35 L1752.52 39.42 L1750.68 40.18 L1750.49 43.10 L1746.25 43.10 L1746.06 40.18 L1744.22 39.42 L1742.02 41.35 L1739.02 38.35 L1740.95 36.15 L1740.19 34.31 L1737.27 34.12 L1737.27 29.88 L1740.19 29.69 L1740.95 27.85 L1739.02 25.65 L1742.02 22.65 L1744.22 24.58Z M1744.77 32.00 a3.60 3.60 0 1 0 7.20 0 a3.60 3.60 0 1 0 -7.20 0Z" fill="#7b7877" fill-rule="evenodd"/><path d="M1771.77 24 L1788.77 40.8 M1788.77 24 L1771.77 40.8" stroke="#7b7877" stroke-width="1.1" opacity="0.85"/></svg><div id="grid" style="position:absolute;left:28.00px;top:58.40px;width:1757.20px;height:320px;border:1px solid #babfc7;background:#fff;box-sizing:border-box"></div><div style="position:absolute;left:29.00px;top:59.40px;width:1726.00px;height:44.80px;background:#f4f6f6;border-bottom:1px solid #babfc7"></div><div class="row" style="position:absolute;left:29.00px;top:105.20px;width:1702.80px;height:38px;background:#ffffff;border-bottom:1px solid #dde2eb"></div><div class="row" style="position:absolute;left:29.00px;top:144.20px;width:1702.80px;height:38px;background:#fbfcfd;border-bottom:1px solid #dde2eb"></div><div class="row" style="position:absolute;left:29.00px;top:183.20px;width:1702.80px;height:38px;background:#ffffff;border-bottom:1px solid #dde2eb"></div><div class="row" style="position:absolute;left:29.00px;top:222.20px;width:1702.80px;height:38px;background:#fbfcfd;border-bottom:1px solid #dde2eb"></div><div class="row" style="position:absolute;left:29.00px;top:261.20px;width:1702.80px;height:38px;background:#ffffff;border-bottom:1px solid #dde2eb"></div><div class="row" style="position:absolute;left:29.00px;top:300.20px;width:1702.80px;height:38px;background:#fbfcfd;border-bottom:1px solid #dde2eb"></div><div style="position:absolute;left:29.00px;top:339.20px;width:1702.80px;height:40px;background:#ffffff"></div><div style="position:absolute;left:76.60px;top:59.40px;width:1px;height:45.5px;background:#c6cbd2"></div><div style="position:absolute;left:77.20px;top:104.60px;width:237.20px;height:38.60px;background:#cde7f9;border:1px solid #3c9ff0;box-sizing:border-box"></div><div style="position:absolute;left:313.30px;top:70.30px;width:1px;height:21.4px;background:#d3d8de"></div><div style="position:absolute;left:734.50px;top:70.30px;width:1px;height:21.4px;background:#d3d8de"></div><div style="position:absolute;left:989.10px;top:70.30px;width:1px;height:21.4px;background:#d3d8de"></div><div style="position:absolute;left:1229.80px;top:70.30px;width:1px;height:21.4px;background:#d3d8de"></div><div style="position:absolute;left:1457.00px;top:70.30px;width:1px;height:21.4px;background:#d3d8de"></div><div style="position:absolute;left:1744.80px;top:70.30px;width:1px;height:21.4px;background:#d3d8de"></div><div style="position:absolute;left:319.80px;top:64.20px;width:149.10px;height:33.70px;border:1px solid #719fd9;background:#f8fafa;box-sizing:border-box"></div><div style="position:absolute;left:439.20px;top:76.45px;width:14.2px;height:1.3px;background:#5f6264"></div><div style="position:absolute;left:439.20px;top:80.85px;width:14.2px;height:1.3px;background:#5f6264"></div><div style="position:absolute;left:439.20px;top:85.25px;width:14.2px;height:1.3px;background:#5f6264"></div><span style="position:absolute;left:94.40px;top:73.95px;font-size:17.20px;line-height:17.20px;white-space:pre;font-weight:400;color:#747779;letter-spacing:-0.195px;-webkit-text-stroke:0.15px #747779;">Group</span><span style="position:absolute;left:331.50px;top:73.95px;font-size:17.20px;line-height:17.20px;white-space:pre;font-weight:400;color:#747779;display:inline-block;transform:scaleX(0.8884);transform-origin:0 50%;-webkit-text-stroke:0.15px #747779;">Task</span><span style="position:absolute;left:491.30px;top:73.95px;font-size:17.20px;line-height:17.20px;white-space:pre;font-weight:400;color:#747779;display:inline-block;transform:scaleX(0.9512);transform-origin:0 50%;-webkit-text-stroke:0.15px #747779;">Login Sessions: Time</span><svg style="position:absolute;left:652.40px;top:73.90px" width="15.4" height="15.4" viewBox="0 0 16 16"><circle cx="8" cy="8" r="8" fill="#6b6b6b"/><path d="M5.4 6.3 C5.4 4.6 6.6 3.6 8.1 3.6 C9.7 3.6 10.8 4.6 10.8 6 C10.8 7.9 8.3 7.9 8.3 9.8" fill="none" stroke="#f5f7f7" stroke-width="1.9"/><circle cx="8.25" cy="12.1" r="1.15" fill="#f5f7f7"/></svg><svg style="position:absolute;left:757.60px;top:75.40px" width="12" height="14" viewBox="0 0 12 14"><path d="M6 1 V12 M1.4 7.6 L6 12.2 L10.6 7.6" fill="none" stroke="#747779" stroke-width="1.3"/></svg><span style="position:absolute;left:774.80px;top:73.95px;font-size:17.20px;line-height:17.20px;white-space:pre;font-weight:400;color:#747779;letter-spacing:-0.029px;-webkit-text-stroke:0.15px #747779;">Work Time: Time</span><svg style="position:absolute;left:908.00px;top:73.90px" width="15.4" height="15.4" viewBox="0 0 16 16"><circle cx="8" cy="8" r="8" fill="#6b6b6b"/><path d="M5.4 6.3 C5.4 4.6 6.6 3.6 8.1 3.6 C9.7 3.6 10.8 4.6 10.8 6 C10.8 7.9 8.3 7.9 8.3 9.8" fill="none" stroke="#f5f7f7" stroke-width="1.9"/><circle cx="8.25" cy="12.1" r="1.15" fill="#f5f7f7"/></svg><span style="position:absolute;left:1007.30px;top:73.95px;font-size:17.20px;line-height:17.20px;white-space:pre;font-weight:400;color:#747779;letter-spacing:0.067px;-webkit-text-stroke:0.15px #747779;">Work Time: Idle time</span><span style="position:absolute;left:1247.60px;top:73.95px;font-size:17.20px;line-height:17.20px;white-space:pre;font-weight:400;color:#747779;letter-spacing:-0.045px;-webkit-text-stroke:0.15px #747779;">Productive Time</span><svg style="position:absolute;left:1375.60px;top:73.90px" width="15.4" height="15.4" viewBox="0 0 16 16"><circle cx="8" cy="8" r="8" fill="#6b6b6b"/><path d="M5.4 6.3 C5.4 4.6 6.6 3.6 8.1 3.6 C9.7 3.6 10.8 4.6 10.8 6 C10.8 7.9 8.3 7.9 8.3 9.8" fill="none" stroke="#f5f7f7" stroke-width="1.9"/><circle cx="8.25" cy="12.1" r="1.15" fill="#f5f7f7"/></svg><span style="position:absolute;left:1474.80px;top:73.95px;font-size:17.20px;line-height:17.20px;white-space:pre;font-weight:400;color:#747779;letter-spacing:-0.012px;-webkit-text-stroke:0.15px #747779;">Productive No Idle Time</span><svg style="position:absolute;left:1662.70px;top:73.90px" width="15.4" height="15.4" viewBox="0 0 16 16"><circle cx="8" cy="8" r="8" fill="#6b6b6b"/><path d="M5.4 6.3 C5.4 4.6 6.6 3.6 8.1 3.6 C9.7 3.6 10.8 4.6 10.8 6 C10.8 7.9 8.3 7.9 8.3 9.8" fill="none" stroke="#f5f7f7" stroke-width="1.9"/><circle cx="8.25" cy="12.1" r="1.15" fill="#f5f7f7"/></svg><div style="position:absolute;left:47.60px;top:114.00px;width:4px;height:4px;border-radius:2px;background:#111"></div><div style="position:absolute;left:47.60px;top:121.00px;width:4px;height:4px;border-radius:2px;background:#111"></div><div style="position:absolute;left:47.60px;top:128.00px;width:4px;height:4px;border-radius:2px;background:#111"></div><span style="position:absolute;left:491.00px;top:116.25px;font-size:17.20px;line-height:17.20px;white-space:pre;font-weight:400;color:#2a2a2a;display:inline-block;transform:scaleX(0.9117);transform-origin:0 50%;">24:43:56</span><span style="position:absolute;left:752.60px;top:116.25px;font-size:17.20px;line-height:17.20px;white-space:pre;font-weight:400;color:#2a2a2a;display:inline-block;transform:scaleX(0.9117);transform-origin:0 50%;">24:37:12</span><span style="position:absolute;left:1007.10px;top:116.25px;font-size:17.20px;line-height:17.20px;white-space:pre;font-weight:400;color:#2a2a2a;display:inline-block;transform:scaleX(0.9117);transform-origin:0 50%;">00:16:48</span><span style="position:absolute;left:1247.60px;top:116.25px;font-size:17.20px;line-height:17.20px;white-space:pre;font-weight:400;color:#2a2a2a;display:inline-block;transform:scaleX(0.9117);transform-origin:0 50%;">16:34:36</span><span style="position:absolute;left:1474.60px;top:116.25px;font-size:17.20px;line-height:17.20px;white-space:pre;font-weight:400;color:#2a2a2a;display:inline-block;transform:scaleX(0.9117);transform-origin:0 50%;">16:24:34</span><div style="position:absolute;left:47.60px;top:153.00px;width:4px;height:4px;border-radius:2px;background:#111"></div><div style="position:absolute;left:47.60px;top:160.00px;width:4px;height:4px;border-radius:2px;background:#111"></div><div style="position:absolute;left:47.60px;top:167.00px;width:4px;height:4px;border-radius:2px;background:#111"></div><span style="position:absolute;left:331.50px;top:155.25px;font-size:17.20px;line-height:17.20px;white-space:pre;font-weight:400;color:#2a2a2a;display:inline-block;transform:scaleX(0.8777);transform-origin:0 50%;">Plan</span><span style="position:absolute;left:491.00px;top:155.25px;font-size:17.20px;line-height:17.20px;white-space:pre;font-weight:400;color:#2a2a2a;display:inline-block;transform:scaleX(0.9117);transform-origin:0 50%;">00:00:00</span><span style="position:absolute;left:752.60px;top:155.25px;font-size:17.20px;line-height:17.20px;white-space:pre;font-weight:400;color:#2a2a2a;display:inline-block;transform:scaleX(0.9117);transform-origin:0 50%;">14:35:20</span><span style="position:absolute;left:1007.10px;top:155.25px;font-size:17.20px;line-height:17.20px;white-space:pre;font-weight:400;color:#2a2a2a;display:inline-block;transform:scaleX(0.9117);transform-origin:0 50%;">00:14:34</span><span style="position:absolute;left:1247.60px;top:155.25px;font-size:17.20px;line-height:17.20px;white-space:pre;font-weight:400;color:#2a2a2a;display:inline-block;transform:scaleX(0.9117);transform-origin:0 50%;">06:55:23</span><span style="position:absolute;left:1474.60px;top:155.25px;font-size:17.20px;line-height:17.20px;white-space:pre;font-weight:400;color:#2a2a2a;display:inline-block;transform:scaleX(0.9117);transform-origin:0 50%;">06:47:35</span><div style="position:absolute;left:47.60px;top:192.00px;width:4px;height:4px;border-radius:2px;background:#111"></div><div style="position:absolute;left:47.60px;top:199.00px;width:4px;height:4px;border-radius:2px;background:#111"></div><div style="position:absolute;left:47.60px;top:206.00px;width:4px;height:4px;border-radius:2px;background:#111"></div><span style="position:absolute;left:331.50px;top:194.25px;font-size:17.20px;line-height:17.20px;white-space:pre;font-weight:400;color:#2a2a2a;letter-spacing:-0.184px;">Communication</span><span style="position:absolute;left:491.00px;top:194.25px;font-size:17.20px;line-height:17.20px;white-space:pre;font-weight:400;color:#2a2a2a;display:inline-block;transform:scaleX(0.9117);transform-origin:0 50%;">00:00:00</span><span style="position:absolute;left:752.60px;top:194.25px;font-size:17.20px;line-height:17.20px;white-space:pre;font-weight:400;color:#2a2a2a;display:inline-block;transform:scaleX(0.9117);transform-origin:0 50%;">08:41:52</span><span style="position:absolute;left:1007.10px;top:194.25px;font-size:17.20px;line-height:17.20px;white-space:pre;font-weight:400;color:#2a2a2a;display:inline-block;transform:scaleX(0.9117);transform-origin:0 50%;">00:02:14</span><span style="position:absolute;left:1247.60px;top:194.25px;font-size:17.20px;line-height:17.20px;white-space:pre;font-weight:400;color:#2a2a2a;display:inline-block;transform:scaleX(0.9117);transform-origin:0 50%;">08:53:30</span><span style="position:absolute;left:1474.60px;top:194.25px;font-size:17.20px;line-height:17.20px;white-space:pre;font-weight:400;color:#2a2a2a;display:inline-block;transform:scaleX(0.9117);transform-origin:0 50%;">08:51:16</span><div style="position:absolute;left:47.60px;top:231.00px;width:4px;height:4px;border-radius:2px;background:#111"></div><div style="position:absolute;left:47.60px;top:238.00px;width:4px;height:4px;border-radius:2px;background:#111"></div><div style="position:absolute;left:47.60px;top:245.00px;width:4px;height:4px;border-radius:2px;background:#111"></div><span style="position:absolute;left:331.50px;top:233.25px;font-size:17.20px;line-height:17.20px;white-space:pre;font-weight:400;color:#2a2a2a;display:inline-block;transform:scaleX(0.9512);transform-origin:0 50%;">Social Media</span><span style="position:absolute;left:491.00px;top:233.25px;font-size:17.20px;line-height:17.20px;white-space:pre;font-weight:400;color:#2a2a2a;display:inline-block;transform:scaleX(0.9117);transform-origin:0 50%;">00:00:00</span><span style="position:absolute;left:752.60px;top:233.25px;font-size:17.20px;line-height:17.20px;white-space:pre;font-weight:400;color:#2a2a2a;display:inline-block;transform:scaleX(0.9117);transform-origin:0 50%;">01:15:19</span><span style="position:absolute;left:1007.10px;top:233.25px;font-size:17.20px;line-height:17.20px;white-space:pre;font-weight:400;color:#2a2a2a;display:inline-block;transform:scaleX(0.9117);transform-origin:0 50%;">00:00:00</span><span style="position:absolute;left:1247.60px;top:233.25px;font-size:17.20px;line-height:17.20px;white-space:pre;font-weight:400;color:#2a2a2a;display:inline-block;transform:scaleX(0.9117);transform-origin:0 50%;">00:14:27</span><span style="position:absolute;left:1474.60px;top:233.25px;font-size:17.20px;line-height:17.20px;white-space:pre;font-weight:400;color:#2a2a2a;display:inline-block;transform:scaleX(0.9117);transform-origin:0 50%;">00:14:27</span><div style="position:absolute;left:47.60px;top:270.00px;width:4px;height:4px;border-radius:2px;background:#111"></div><div style="position:absolute;left:47.60px;top:277.00px;width:4px;height:4px;border-radius:2px;background:#111"></div><div style="position:absolute;left:47.60px;top:284.00px;width:4px;height:4px;border-radius:2px;background:#111"></div><span style="position:absolute;left:331.50px;top:272.25px;font-size:17.20px;line-height:17.20px;white-space:pre;font-weight:400;color:#2a2a2a;display:inline-block;transform:scaleX(0.9466);transform-origin:0 50%;">Emailing</span><span style="position:absolute;left:491.00px;top:272.25px;font-size:17.20px;line-height:17.20px;white-space:pre;font-weight:400;color:#2a2a2a;display:inline-block;transform:scaleX(0.9117);transform-origin:0 50%;">00:00:00</span><span style="position:absolute;left:752.60px;top:272.25px;font-size:17.20px;line-height:17.20px;white-space:pre;font-weight:400;color:#2a2a2a;display:inline-block;transform:scaleX(0.9117);transform-origin:0 50%;">00:02:43</span><span style="position:absolute;left:1007.10px;top:272.25px;font-size:17.20px;line-height:17.20px;white-space:pre;font-weight:400;color:#2a2a2a;display:inline-block;transform:scaleX(0.9117);transform-origin:0 50%;">00:00:00</span><span style="position:absolute;left:1247.60px;top:272.25px;font-size:17.20px;line-height:17.20px;white-space:pre;font-weight:400;color:#2a2a2a;display:inline-block;transform:scaleX(0.9117);transform-origin:0 50%;">00:30:46</span><span style="position:absolute;left:1474.60px;top:272.25px;font-size:17.20px;line-height:17.20px;white-space:pre;font-weight:400;color:#2a2a2a;display:inline-block;transform:scaleX(0.9117);transform-origin:0 50%;">00:30:46</span><div style="position:absolute;left:47.60px;top:309.00px;width:4px;height:4px;border-radius:2px;background:#111"></div><div style="position:absolute;left:47.60px;top:316.00px;width:4px;height:4px;border-radius:2px;background:#111"></div><div style="position:absolute;left:47.60px;top:323.00px;width:4px;height:4px;border-radius:2px;background:#111"></div><span style="position:absolute;left:331.50px;top:311.25px;font-size:17.20px;line-height:17.20px;white-space:pre;font-weight:400;color:#2a2a2a;letter-spacing:-0.188px;">Archiving</span><span style="position:absolute;left:491.00px;top:311.25px;font-size:17.20px;line-height:17.20px;white-space:pre;font-weight:400;color:#2a2a2a;display:inline-block;transform:scaleX(0.9117);transform-origin:0 50%;">00:00:00</span><span style="position:absolute;left:752.60px;top:311.25px;font-size:17.20px;line-height:17.20px;white-space:pre;font-weight:400;color:#2a2a2a;display:inline-block;transform:scaleX(0.9117);transform-origin:0 50%;">00:01:58</span><span style="position:absolute;left:1007.10px;top:311.25px;font-size:17.20px;line-height:17.20px;white-space:pre;font-weight:400;color:#2a2a2a;display:inline-block;transform:scaleX(0.9117);transform-origin:0 50%;">00:00:00</span><span style="position:absolute;left:1247.60px;top:311.25px;font-size:17.20px;line-height:17.20px;white-space:pre;font-weight:400;color:#2a2a2a;display:inline-block;transform:scaleX(0.9117);transform-origin:0 50%;">00:00:30</span><span style="position:absolute;left:1474.60px;top:311.25px;font-size:17.20px;line-height:17.20px;white-space:pre;font-weight:400;color:#2a2a2a;display:inline-block;transform:scaleX(0.9117);transform-origin:0 50%;">00:00:30</span><svg style="position:absolute;left:97.30px;top:120.00px" width="16" height="10" viewBox="0 0 16 10"><path d="M1.6 1.6 L8 8 L14.4 1.6" fill="none" stroke="#60666b" stroke-width="1.25"/></svg><span style="position:absolute;left:133.30px;top:116.25px;font-size:17.20px;line-height:17.20px;white-space:pre;font-weight:400;color:#f0963a;display:inline-block;transform:scaleX(0.9149);transform-origin:0 50%;">Tia Sanders</span><div style="position:absolute;left:1731.80px;top:105.20px;width:23.20px;height:300px;background:#f1f1f1"></div><div style="position:absolute;left:1733.40px;top:129.00px;width:19.40px;height:300px;background:#c1c1c1"></div><svg style="position:absolute;left:1737.20px;top:114.20px" width="12" height="7" viewBox="0 0 12 7"><path d="M0.5 6.2 L6 0.8 L11.5 6.2Z" fill="#a3a3a3"/></svg><div style="position:absolute;left:1755.00px;top:59.40px;width:28.20px;height:320px;background:#fff;border-left:1px solid #babfc7"></div><div style="position:absolute;left:1756.00px;top:81.10px;width:26.2px;height:1px;background:#c9ced4"></div><div style="position:absolute;left:1756.00px;top:195.70px;width:26.2px;height:1px;background:#c9ced4"></div><svg style="position:absolute;left:1761.60px;top:97.80px" width="16" height="14" viewBox="0 0 16 14"><path d="M1.2 1 V13 M5.4 1 V13 M9.6 1 V13 M13.8 1 V13" stroke="#333" stroke-width="1.5"/></svg><span style="position:absolute;left:1777.80px;top:120.00px;font-size:17.20px;line-height:17.20px;white-space:pre;color:#333;transform-origin:0 0;transform:rotate(90deg) scaleX(0.9347);">Columns</span></div><div id="header" style="position:absolute;left:208px;top:0;width:1840px;height:84.5px;overflow:hidden;background:#ec9b50"><svg style="position:absolute;left:0;top:0" width="1840" height="84" viewBox="208 0 1840 84" preserveAspectRatio="none" shape-rendering="geometricPrecision"><polygon points="208,0 230,0 293,84 208,84" fill="#d9722b" stroke="#d9722b" stroke-width="0.6"/><polygon points="230,0 333,0 307,84 293,84" fill="#e5842a" stroke="#e5842a" stroke-width="0.6"/><polygon points="333,0 444,0 489,60 473,84 307,84" fill="#e8952c" stroke="#e8952c" stroke-width="0.6"/><polygon points="444,0 681,0 676,23 489,60" fill="#e8842b" stroke="#e8842b" stroke-width="0.6"/><polygon points="489,60 676,23 620,84 473,84" fill="#e0a22b" stroke="#e0a22b" stroke-width="0.6"/><polygon points="676,23 721,84 620,84" fill="#e8952c" stroke="#e8952c" stroke-width="0.6"/><polygon points="681,0 788,0 676,23" fill="#ea8844" stroke="#ea8844" stroke-width="0.6"/><polygon points="676,23 788,0 1031,0 1004,84 721,84" fill="#ec9b50" stroke="#ec9b50" stroke-width="0.6"/><polygon points="1031,0 1088,0 1148,84 1004,84" fill="#ec9050" stroke="#ec9050" stroke-width="0.6"/><polygon points="1088,0 1204,0 1180,84 1148,84" fill="#e38c55" stroke="#e38c55" stroke-width="0.6"/><polygon points="1204,0 1299,0 1355,73 1363,84 1180,84" fill="#e3925f" stroke="#e3925f" stroke-width="0.6"/><polygon points="1299,0 1510,0 1534,37 1355,73" fill="#ec9f6a" stroke="#ec9f6a" stroke-width="0.6"/><polygon points="1355,73 1534,37 1527,84 1363,84" fill="#f0ad72" stroke="#f0ad72" stroke-width="0.6"/><polygon points="1510,0 1903,0 1874,84 1527,84 1534,37" fill="#efb75c" stroke="#efb75c" stroke-width="0.6"/><polygon points="1510,0 1727,0 1579,84 1527,84 1534,37" fill="#eeb067" stroke="#eeb067" stroke-width="0.6"/><polygon points="1442,0 1510,0 1534,37" fill="#efaa68" stroke="#efaa68" stroke-width="0.6"/><polygon points="1534,37 1580,84 1527,84" fill="#f2c070" stroke="#f2c070" stroke-width="0.6"/><polygon points="1903,0 1941,0 2008,84 1874,84" fill="#e29a50" stroke="#e29a50" stroke-width="0.6"/><polygon points="1941,0 2048,0 2048,84 2008,84" fill="#d48b4a" stroke="#d48b4a" stroke-width="0.6"/><path d="M676 23 L655.6 84" stroke="rgba(255,255,255,0.28)" stroke-width="0.8"/></svg><div style="position:absolute;left:0;top:0;width:1840px;height:1.2px;background:#1c1c1c"></div><div style="position:absolute;left:24.3px;top:33.2px;width:30.5px;height:3px;background:rgba(255,255,255,0.85)"></div><div style="position:absolute;left:24.3px;top:41.2px;width:30.5px;height:3px;background:rgba(255,255,255,0.85)"></div><div style="position:absolute;left:24.3px;top:49.2px;width:30.5px;height:3px;background:rgba(255,255,255,0.85)"></div><span style="position:absolute;left:94.80px;top:26.30px;font-size:33.80px;line-height:33.80px;white-space:pre;font-weight:400;color:#fff;display:inline-block;transform:scaleX(1.0562);transform-origin:0 50%;-webkit-text-stroke:0.3px rgba(232,140,44,0.9);">Productivity</span><svg style="position:absolute;left:0;top:0" width="1840" height="84" viewBox="208 0 1840 84"><circle cx="1482" cy="39.2" r="11.6" fill="none" stroke="rgba(255,255,255,0.78)" stroke-width="3.4"/><path d="M1490.6 48.4 L1500.6 58.6" stroke="rgba(255,255,255,0.78)" stroke-width="3.6" stroke-linecap="butt"/><defs><clipPath id="avc"><circle cx="1560.2" cy="41.8" r="25.2"/></clipPath></defs><circle cx="1560.2" cy="41.8" r="25.2" fill="#fff"/><g clip-path="url(#avc)" fill="#b0b0b0"><path d="M1560.1 28.7 C1565.5 28.7 1568.4 32 1568.3 37.5 C1568.2 42.5 1566.5 45.5 1564.9 48.5 L1564.6 52 C1565 54.5 1568 55.5 1578.3 58.5 L1584 60.2 L1584 70 L1536 70 L1536 60.2 L1541.7 58.5 C1552 55.5 1555.2 54.5 1555.6 52 L1555.3 48.5 C1553.7 45.5 1552 42.5 1551.9 37.5 C1551.8 32 1554.7 28.7 1560.1 28.7Z"/></g><path d="M1759.00 27.24 L1759.26 23.18 L1765.14 23.18 L1765.40 27.24 L1767.97 28.30 L1771.02 25.61 L1775.19 29.78 L1772.50 32.83 L1773.56 35.40 L1777.62 35.66 L1777.62 41.54 L1773.56 41.80 L1772.50 44.37 L1775.19 47.42 L1771.02 51.59 L1767.97 48.90 L1765.40 49.96 L1765.14 54.02 L1759.26 54.02 L1759.00 49.96 L1756.43 48.90 L1753.38 51.59 L1749.21 47.42 L1751.90 44.37 L1750.84 41.80 L1746.78 41.54 L1746.78 35.66 L1750.84 35.40 L1751.90 32.83 L1749.21 29.78 L1753.38 25.61 L1756.43 28.30Z M1757.30 38.60 a4.90 4.90 0 1 0 9.80 0 a4.90 4.90 0 1 0 -9.80 0Z" fill="rgba(255,255,255,0.82)" fill-rule="evenodd"/><path d="M1823.5 23.9 L1838.2 38.5 L1823.5 53.1 L1808.8 38.5Z" fill="none" stroke="rgba(255,255,255,0.78)" stroke-width="1.5" stroke-linejoin="round"/><path d="M1823.5 30.6 V41.8" stroke="rgba(255,255,255,0.78)" stroke-width="2.5"/><circle cx="1823.5" cy="45.4" r="1.5" fill="rgba(255,255,255,0.78)"/></svg><span style="position:absolute;left:1388.10px;top:19.00px;font-size:20.30px;line-height:20.30px;white-space:pre;font-weight:400;font-style:italic;color:#fff;display:inline-block;transform:scaleX(0.9429);transform-origin:0 50%;">Ozzy Adminini</span><span style="position:absolute;left:1388.10px;top:50.05px;font-size:14.60px;line-height:14.60px;white-space:pre;font-weight:400;font-style:italic;color:rgba(255,255,255,0.62);display:inline-block;transform:scaleX(0.9713);transform-origin:0 50%;">Administrator</span><div style="position:absolute;left:1657.2px;top:19.8px;width:176.5px;height:46.6px;border:1px solid rgba(255,255,255,0.72);border-radius:4px;background:rgba(40,28,16,0.52)"></div><span style="position:absolute;left:1667.80px;top:37.35px;font-size:17.20px;line-height:17.20px;white-space:pre;font-weight:700;color:#fff;display:inline-block;transform:scaleX(0.9201);transform-origin:0 50%;">EXPLAIN THIS PAGE</span></div><div id="sidebar" style="position:absolute;left:0;top:0;width:208px;height:1003px;background:#0f0f0f;overflow:hidden"><div style="position:absolute;left:27px;top:20px;width:33px;height:34px;border-radius:4px;background:#f7941e"></div><span style="position:absolute;left:36.00px;top:23.30px;font-size:28.30px;line-height:28.30px;white-space:pre;font-weight:400;color:#fff;display:inline-block;transform:scaleX(0.93);transform-origin:0 50%;">T</span><span style="position:absolute;left:63.20px;top:23.30px;font-size:28.30px;line-height:28.30px;white-space:pre;font-weight:400;color:#f4f4f4;display:inline-block;transform:scaleX(0.8544);transform-origin:0 50%;-webkit-text-stroke:0.35px #0f0f0f;">ERAMIND</span><div style="position:absolute;left:0;top:136px;width:208px;height:49px;background:#202020"></div><span class="nav" style="position:absolute;left:56.00px;top:103.45px;font-size:15.70px;line-height:15.70px;white-space:pre;font-weight:700;color:#c3c3c3;display:inline-block;transform:scaleX(0.9492);transform-origin:0 50%;">TIME TRACKING</span><span class="nav" style="position:absolute;left:57.10px;top:153.45px;font-size:15.70px;line-height:15.70px;white-space:pre;font-weight:700;color:#ffffff;display:inline-block;transform:scaleX(0.9146);transform-origin:0 50%;">BI REPORTS</span><span class="nav" style="position:absolute;left:56.00px;top:203.65px;font-size:15.70px;line-height:15.70px;white-space:pre;font-weight:700;color:#c3c3c3;display:inline-block;transform:scaleX(0.9276);transform-origin:0 50%;">DASHBOARDS</span><span class="nav" style="position:absolute;left:56.00px;top:253.85px;font-size:15.70px;line-height:15.70px;white-space:pre;font-weight:700;color:#c3c3c3;display:inline-block;transform:scaleX(1.0129);transform-origin:0 50%;">MONITORING</span><span class="nav" style="position:absolute;left:57.50px;top:304.75px;font-size:15.70px;line-height:15.70px;white-space:pre;font-weight:700;color:#c3c3c3;display:inline-block;transform:scaleX(0.9097);transform-origin:0 50%;">RISK</span><span class="nav" style="position:absolute;left:57.50px;top:354.05px;font-size:15.70px;line-height:15.70px;white-space:pre;font-weight:700;color:#c3c3c3;display:inline-block;transform:scaleX(0.9487);transform-origin:0 50%;">PRODUCTIVITY</span><span class="nav" style="position:absolute;left:57.50px;top:404.15px;font-size:15.70px;line-height:15.70px;white-space:pre;font-weight:700;color:#c3c3c3;display:inline-block;transform:scaleX(0.9591);transform-origin:0 50%;">BEHAVIOR</span><span class="nav" style="position:absolute;left:56.00px;top:453.25px;font-size:15.70px;line-height:15.70px;white-space:pre;font-weight:700;color:#c3c3c3;display:inline-block;transform:scaleX(0.9023);transform-origin:0 50%;">EMPLOYEES</span><span class="nav" style="position:absolute;left:56.00px;top:504.45px;font-size:15.70px;line-height:15.70px;white-space:pre;font-weight:700;color:#c3c3c3;display:inline-block;transform:scaleX(0.9298);transform-origin:0 50%;">COMPUTERS</span><span class="nav" style="position:absolute;left:56.00px;top:554.45px;font-size:15.70px;line-height:15.70px;white-space:pre;font-weight:700;color:#c3c3c3;display:inline-block;transform:scaleX(0.9434);transform-origin:0 50%;">CONFIGURE</span><span class="nav" style="position:absolute;left:55.60px;top:605.25px;font-size:15.70px;line-height:15.70px;white-space:pre;font-weight:700;color:#c3c3c3;display:inline-block;transform:scaleX(0.9068);transform-origin:0 50%;">SYSTEM</span><svg style="position:absolute;left:0;top:0" width="208" height="1003" viewBox="0 0 208 1003"><circle cx="34.1" cy="111.3" r="9.1" fill="none" stroke="#b9b1a8" stroke-width="1.1"/><path d="M34.6 106 V112 H29.6" fill="none" stroke="#b9b1a8" stroke-width="1.1"/><path d="M33.40 162.60 L33.40 151.40 A11.20 11.20 0 1 0 41.32 170.52 Z" fill="#fff"/><path d="M35.20 160.80 L35.20 149.60 A11.20 11.20 0 0 1 46.40 160.80 Z" fill="#fff"/><path d="M36.00 163.30 L47.20 163.30 A11.20 11.20 0 0 1 43.92 171.22 Z" fill="#fff"/><path d="M22.7 211 L27.4 212 L33.5 206.8 L38.3 208.8 L45.6 201.9 L45.6 212.4 L40.4 214.0 L35.5 212.0 L30.7 217.6 L26.5 216.0 L22.7 217.4Z" fill="#b4b4b4"/><path d="M23.2 211 V222.3 H45.1 V203" fill="none" stroke="#b4b4b4" stroke-width="1"/><rect x="25.4" y="251.1" width="17.2" height="20.7" fill="#b4b4b4"/><path d="M28.8 255.6 H38.4" stroke="#222" stroke-width="1.2"/><path d="M29 260 H35 M29 262.8 H35 M29 265.6 H35" stroke="#666" stroke-width="1.3"/><path d="M37.6 259.3 V266.3" stroke="#777" stroke-width="1" stroke-dasharray="1.6 1.2"/><path d="M29.3 301.7 L37 301.7 L35.4 308.7 L41.2 308.7 L31.8 323.6 L33.6 314.3 L27.1 314.3Z" fill="#b4b4b4"/><text transform="translate(34 370.3) scale(0.86 1)" x="0" y="0" text-anchor="middle" font-family='"Liberation Sans", sans-serif' font-weight="700" font-size="27.5" fill="#b4b4b4" stroke="#b4b4b4" stroke-width="0.5">$</text><path d="M29.6 404.6 H43.8 A7.4 7.4 0 0 1 43.8 419.4 Q41.6 419.4 40 417.3 H33.4 Q31.8 419.4 29.6 419.4 A7.4 7.4 0 0 1 29.6 404.6Z" fill="#b4b4b4"/><path d="M29.3 408.6 V415 M26.1 411.8 H32.5" stroke="#0f0f0f" stroke-width="1.7"/><circle cx="45.7" cy="410" r="1.5" fill="#0f0f0f"/><circle cx="42.3" cy="413.6" r="1.5" fill="#0f0f0f"/><path transform="translate(29.30 452.00) scale(0.800)" d="M10 0 C13.2 0 15 2.6 15 6 C15 8.6 14 10.6 12.6 11.8 C12.6 13.4 13.4 14 15.4 14.8 C18 15.8 19.6 16.8 20 19.5 L0 19.5 C0.4 16.8 2 15.8 4.6 14.8 C6.6 14 7.4 13.4 7.4 11.8 C6 10.6 5 8.6 5 6 C5 2.6 6.8 0 10 0Z" fill="#b4b4b4"/><path transform="translate(22.40 452.00) scale(0.970)" d="M10 0 C13.2 0 15 2.6 15 6 C15 8.6 14 10.6 12.6 11.8 C12.6 13.4 13.4 14 15.4 14.8 C18 15.8 19.6 16.8 20 19.5 L0 19.5 C0.4 16.8 2 15.8 4.6 14.8 C6.6 14 7.4 13.4 7.4 11.8 C6 10.6 5 8.6 5 6 C5 2.6 6.8 0 10 0Z" fill="#b4b4b4" stroke="#0f0f0f" stroke-width="1.1" paint-order="stroke"/><path d="M24 503.3 H44.3 V518 H24Z M26 505.3 V515 H42.3 V505.3Z" fill="#b4b4b4" fill-rule="evenodd"/><path d="M32 518 H36.4 L38.2 521 V522.2 H30.2 V521Z" fill="#b4b4b4"/><path d="M31.60 553.71 L31.82 550.69 L35.98 550.69 L36.20 553.71 L38.21 554.54 L40.50 552.56 L43.44 555.50 L41.46 557.79 L42.29 559.80 L45.31 560.02 L45.31 564.18 L42.29 564.40 L41.46 566.41 L43.44 568.70 L40.50 571.64 L38.21 569.66 L36.20 570.49 L35.98 573.51 L31.82 573.51 L31.60 570.49 L29.59 569.66 L27.30 571.64 L24.36 568.70 L26.34 566.41 L25.51 564.40 L22.49 564.18 L22.49 560.02 L25.51 559.80 L26.34 557.79 L24.36 555.50 L27.30 552.56 L29.59 554.54Z M30.40 562.10 a3.50 3.50 0 1 0 7.00 0 a3.50 3.50 0 1 0 -7.00 0Z" fill="#b4b4b4" fill-rule="evenodd"/><path transform="translate(22.20 602.40) scale(0.930)" d="M10 0 C13.2 0 15 2.6 15 6 C15 8.6 14 10.6 12.6 11.8 C12.6 13.4 13.4 14 15.4 14.8 C18 15.8 19.6 16.8 20 19.5 L0 19.5 C0.4 16.8 2 15.8 4.6 14.8 C6.6 14 7.4 13.4 7.4 11.8 C6 10.6 5 8.6 5 6 C5 2.6 6.8 0 10 0Z" fill="#b4b4b4"/><circle cx="39.3" cy="618.2" r="3.6" fill="#0f0f0f" stroke="#b4b4b4" stroke-width="1.2"/><path d="M41.9 620.9 L45 624.2" stroke="#b4b4b4" stroke-width="1.3"/></svg><div style="position:absolute;left:29px;top:661.5px;width:149px;height:50.4px;border-radius:4px;background:#6aa66d"></div><span style="position:absolute;left:42.90px;top:679.60px;font-size:16.90px;line-height:16.90px;white-space:pre;font-weight:700;color:#fff;display:inline-block;transform:scaleX(0.9567);transform-origin:0 50%;">TRY TERAMIND</span></div></body></html>
